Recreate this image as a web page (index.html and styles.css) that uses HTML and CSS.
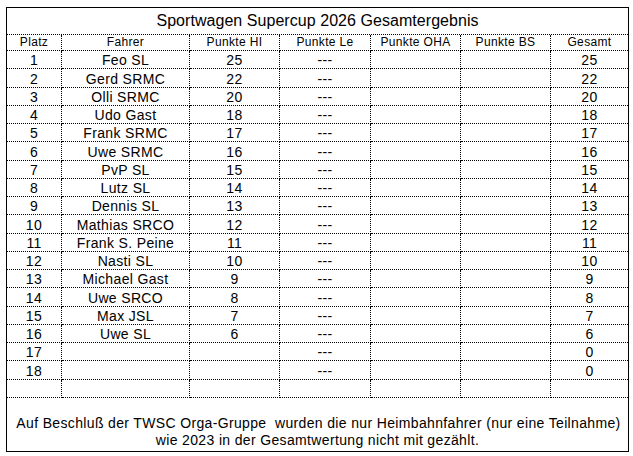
FILE: index.html
```html
<!DOCTYPE html>
<html lang="de">
<head>
<meta charset="utf-8">
<title>Sportwagen Supercup 2026 Gesamtergebnis</title>
<link rel="stylesheet" href="styles.css">
</head>
<body>
<div class="sheet">
  <div class="title">Sportwagen Supercup 2026 Gesamtergebnis</div>
  <div class="row head"><div>Platz</div><div>Fahrer</div><div>Punkte HI</div><div>Punkte Le</div><div>Punkte OHA</div><div>Punkte BS</div><div>Gesamt</div></div>
  <div class="row"><div>1</div><div>Feo SL</div><div>25</div><div>---</div><div></div><div></div><div>25</div></div>
  <div class="row"><div>2</div><div>Gerd SRMC</div><div>22</div><div>---</div><div></div><div></div><div>22</div></div>
  <div class="row"><div>3</div><div>Olli SRMC</div><div>20</div><div>---</div><div></div><div></div><div>20</div></div>
  <div class="row"><div>4</div><div>Udo Gast</div><div>18</div><div>---</div><div></div><div></div><div>18</div></div>
  <div class="row"><div>5</div><div>Frank SRMC</div><div>17</div><div>---</div><div></div><div></div><div>17</div></div>
  <div class="row"><div>6</div><div>Uwe SRMC</div><div>16</div><div>---</div><div></div><div></div><div>16</div></div>
  <div class="row"><div>7</div><div>PvP SL</div><div>15</div><div>---</div><div></div><div></div><div>15</div></div>
  <div class="row"><div>8</div><div>Lutz SL</div><div>14</div><div>---</div><div></div><div></div><div>14</div></div>
  <div class="row"><div>9</div><div>Dennis SL</div><div>13</div><div>---</div><div></div><div></div><div>13</div></div>
  <div class="row"><div>10</div><div>Mathias SRCO</div><div>12</div><div>---</div><div></div><div></div><div>12</div></div>
  <div class="row"><div>11</div><div>Frank S. Peine</div><div>11</div><div>---</div><div></div><div></div><div>11</div></div>
  <div class="row"><div>12</div><div>Nasti SL</div><div>10</div><div>---</div><div></div><div></div><div>10</div></div>
  <div class="row"><div>13</div><div>Michael Gast</div><div>9</div><div>---</div><div></div><div></div><div>9</div></div>
  <div class="row"><div>14</div><div>Uwe SRCO</div><div>8</div><div>---</div><div></div><div></div><div>8</div></div>
  <div class="row"><div>15</div><div>Max JSL</div><div>7</div><div>---</div><div></div><div></div><div>7</div></div>
  <div class="row"><div>16</div><div>Uwe SL</div><div>6</div><div>---</div><div></div><div></div><div>6</div></div>
  <div class="row"><div>17</div><div></div><div></div><div>---</div><div></div><div></div><div>0</div></div>
  <div class="row"><div>18</div><div></div><div></div><div>---</div><div></div><div></div><div>0</div></div>
  <div class="row"><div></div><div></div><div></div><div></div><div></div><div></div><div></div></div>
  <div class="note">
    <div class="line1">Auf Beschluß der TWSC Orga-Gruppe&nbsp; wurden die nur Heimbahnfahrer (nur eine Teilnahme)</div>
    <div class="line2">wie 2023 in der Gesamtwertung nicht mit gezählt.</div>
  </div>
</div>
</body>
</html>
```
FILE: styles.css
```css
html, body {
  margin: 0;
  background: #fff;
}
body {
  padding: 7px 0 0 6px;
  font-family: "Liberation Sans", Arial, sans-serif;
  color: #000;
}
.sheet {
  width: 623px;
  box-sizing: border-box;
  border: 1px solid #000;
  display: grid;
  grid-template-columns: 55px 128px 90px 91px 90px 90px 77px;
  grid-template-rows: 27px 16px repeat(19, 18.263px) 53px;
}
.title {
  grid-column: 1 / -1;
  border-bottom: 1px dotted #000;
  text-align: center;
  font-size: 16px;
  line-height: 26px;
  letter-spacing: 0.05px;
}
.row {
  display: contents;
}
.row > div {
  border-right: 1px dotted #000;
  border-bottom: 1px dotted #000;
  display: flex;
  align-items: flex-end;
  justify-content: center;
  font-size: 14px;
  line-height: 16px;
  letter-spacing: 0.35px;
  white-space: nowrap;
  overflow: hidden;
}
.row > div:last-child {
  border-right: none;
}
.row.head > div {
  font-size: 12px;
  line-height: 15px;
  letter-spacing: 0.35px;
}
.note {
  grid-column: 1 / -1;
  padding-top: 17px;
  font-size: 14px;
  line-height: 17px;
  letter-spacing: 0.35px;
  text-align: center;
}
.line1 {
  padding-left: 2px;
  white-space: nowrap;
}
.line2 {
  padding-left: 0;
}
```
